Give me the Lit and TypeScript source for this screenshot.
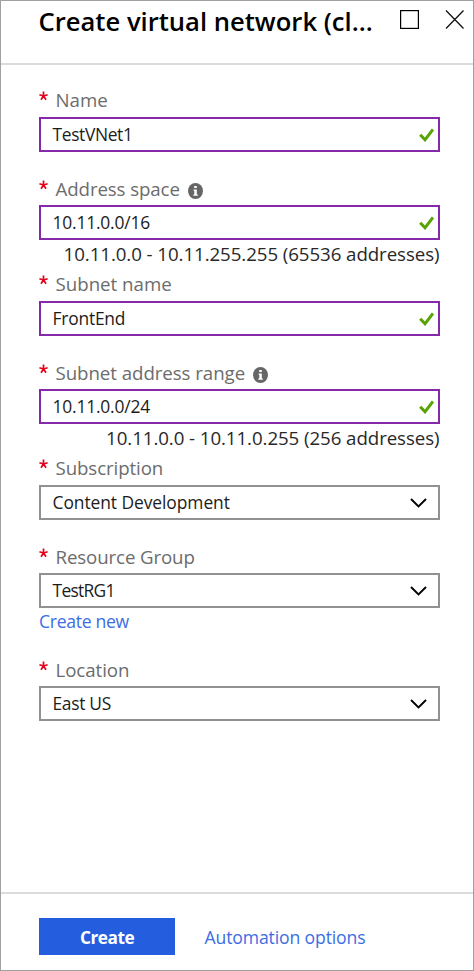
import { LitElement, html, css, svg, nothing } from "lit";
import { customElement, property } from "lit/decorators.js";
import { styleMap } from "lit/directives/style-map.js";

interface Field {
  label: string;
  value: string;
  kind: "text" | "select";
  info?: boolean;
  hint?: string;
  link?: string;
  labelTrack?: number;
  valueTrack?: number;
}

const FIELDS: Field[] = [
  { label: "Name", value: "TestVNet1", kind: "text", valueTrack: -0.35 },
  { label: "Address space", value: "10.11.0.0/16", kind: "text", info: true, hint: "10.11.0.0 - 10.11.255.255 (65536 addresses)", labelTrack: -0.1, valueTrack: -0.18 },
  { label: "Subnet name", value: "FrontEnd", kind: "text", valueTrack: -0.2 },
  { label: "Subnet address range", value: "10.11.0.0/24", kind: "text", info: true, hint: "10.11.0.0 - 10.11.0.255 (256 addresses)", labelTrack: -0.06, valueTrack: -0.18 },
  { label: "Subscription", value: "Content Development", kind: "select", labelTrack: -0.1, valueTrack: -0.06 },
  { label: "Resource Group", value: "TestRG1", kind: "select", link: "Create new", labelTrack: -0.12, valueTrack: -0.7 },
  { label: "Location", value: "East US", kind: "select", labelTrack: -0.07, valueTrack: -0.3 },
];

const track = (v?: number) => styleMap(v ? { letterSpacing: `${v}px` } : {});

const check = svg`<path d="M1.2 6.8 L6 11.8 L14 1.4" fill="none" stroke="#57a300" stroke-width="3"/>`;
const chevron = svg`<path d="M1 1 L8.5 8.4 L16 1" fill="none" stroke="#000" stroke-width="1.9"/>`;

@customElement("form-field")
export class FormField extends LitElement {
  @property({ attribute: false }) field!: Field;

  static styles = css`
    :host { display: block; }
    .label { display: flex; height: var(--label-height, 31px); line-height: 27px; font-size: 18.7px; color: #6c6c6c; white-space: nowrap; }
    .star { width: 16.5px; flex: none; display: block; }
    .star svg { display: block; margin-top: 5px; }
    .info { margin: 8px 0 0 8px; width: 15px; height: 16px; flex: none; }
    .box { box-sizing: border-box; height: 35px; border: 2px solid #8529a8; padding: 0 4px 0 11.5px; display: flex; align-items: center; justify-content: space-between; }
    .select { border-color: #919191; padding-right: 11px; }
    .value { font-size: 17.4px; line-height: 31px; color: #1c1c1c; white-space: nowrap; }
    .hint { height: 30px; line-height: 27px; font-size: 18.7px; letter-spacing: -0.07px; color: #282828; display: flex; justify-content: flex-end; white-space: nowrap; padding-right: 0.5px; }
    .link { height: 26px; line-height: 27px; font-size: 17.6px; letter-spacing: -0.3px; color: #3c6de4; white-space: nowrap; }
  `;

  render() {
    const f = this.field;
    return html`
      <div class="label">
        <span class="star"><svg width="9" height="10" viewBox="0 0 9 10"><path d="M4.5 5V.5M4.5 5L.4 3.7M4.5 5L8.6 3.7M4.5 5L2 8.7M4.5 5L7 8.7" stroke="#e3001b" stroke-width="1.7"/></svg></span>
        <span style=${track(f.labelTrack)}>${f.label}</span>
        ${f.info ? html`<svg class="info" viewBox="0 0 15 16"><ellipse cx="7.5" cy="8" rx="7.5" ry="8" fill="#666"/><path d="M6.2 3h2.6v2.1H6.2zM5.6 6.4h3.2v5h1v1.4H5.3v-1.4h1V7.8h-.7z" fill="#fff"/></svg>` : nothing}
      </div>
      <div class="box ${f.kind}">
        <span class="value" style=${track(f.valueTrack)}>${f.value}</span>
        ${f.kind === "text"
          ? html`<svg width="15" height="14" viewBox="0 0 15 14">${check}</svg>`
          : html`<svg width="17" height="10" viewBox="0 0 17 10">${chevron}</svg>`}
      </div>
      ${f.hint ? html`<div class="hint">${f.hint}</div>` : nothing}
      ${f.link ? html`<div class="link">${f.link}</div>` : nothing}
    `;
  }
}

@customElement("app-root")
export class AppRoot extends LitElement {
  static styles = css`
    :host { display: flex; flex-direction: column; box-sizing: border-box; width: 474px; height: 971px; border: 1px solid #a0a0a0; background: #fff; font-family: "Open Sans", "Noto Sans", sans-serif; overflow: hidden; }
    header { box-sizing: border-box; height: 64px; flex: none; border-bottom: 2px solid #dcdcdc; padding: 0 7px 0 37.5px; display: flex; }
    .title { width: 361.5px; font-size: 25.6px; line-height: 41px; font-weight: 600; color: #000; white-space: nowrap; }
    .icons { display: flex; gap: 26px; padding-top: 9px; }
    main { flex: 1; padding: 21px 33px 0 38px; }
    .gap { height: 23px; }
    .gap.short { height: 22px; }
    .gap + form-field { --label-height: 30px; }
    footer { box-sizing: border-box; height: 78px; flex: none; border-top: 2px solid #dcdcdc; padding: 24px 0 0 38px; display: flex; gap: 29.5px; }
    .create { width: 136px; height: 37px; background: #245edf; color: #fff; font-weight: 700; font-size: 17.2px; letter-spacing: -0.45px; line-height: 39px; text-align: center; }
    .auto { color: #3c6de4; font-size: 17.6px; line-height: 38px; letter-spacing: -0.13px; white-space: nowrap; }
  `;

  render() {
    return html`
      <header>
        <div class="title">Create virtual network (cl...</div>
        <div class="icons">
          <svg width="19" height="19" viewBox="0 0 19 19"><rect x=".6" y=".6" width="17.8" height="17.8" fill="none" stroke="#000" stroke-width="1.2"/></svg>
          <svg width="20" height="19" viewBox="0 0 20 19"><path d="M1 .5L18.5 18.5M18.5 .5L1 18.5" stroke="#111" stroke-width="1.3"/></svg>
        </div>
      </header>
      <main>
        ${FIELDS.map((f, i) => html`
          <form-field .field=${f}></form-field>
          ${i === FIELDS.length - 1 || f.hint ? nothing : html`<div class="gap ${f.link ? "short" : ""}"></div>`}
        `)}
      </main>
      <footer>
        <div class="create">Create</div>
        <div class="auto">Automation options</div>
      </footer>
    `;
  }
}
